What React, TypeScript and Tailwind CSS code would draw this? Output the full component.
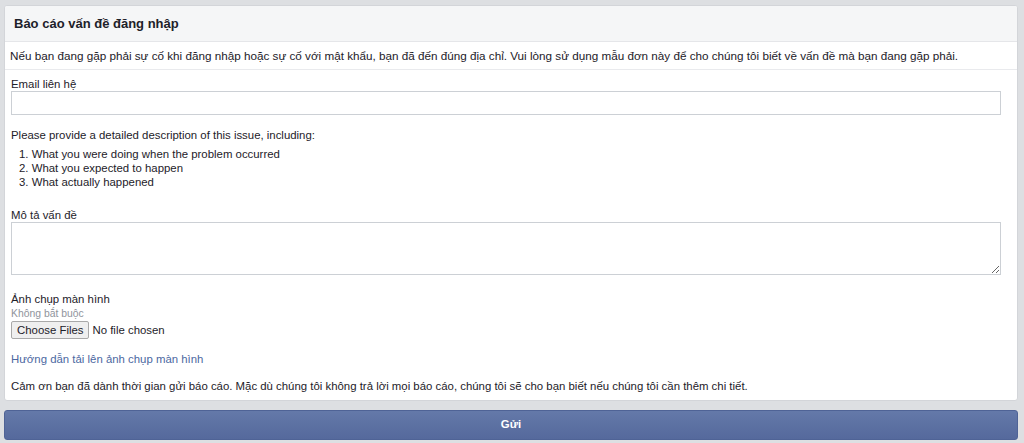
import React from "react";

export default function App() {
  return (
    <div
      className="w-[1024px] h-[443px] bg-[#dddfe2] pt-[5px] px-[4px] text-[#1d2129] text-[11.4px]"
      style={{ fontFamily: '"Liberation Sans", Arial, sans-serif' }}
    >
      <div className="w-[1014px] bg-white border border-[#d3d5d9] rounded-[3px] overflow-hidden">
        <div className="h-[36px] bg-[#f5f6f7] border-b border-[#e5e6e9] flex items-center pl-[9px]">
          <span className="text-[13px] font-bold text-[#1d2129]">Báo cáo vấn đề đăng nhập</span>
        </div>
        <div className="h-[28px] border-b border-[#e9eaed] flex items-center pl-[5px] text-[11.7px]">
          Nếu bạn đang gặp phải sự cố khi đăng nhập hoặc sự cố với mật khẩu, bạn đã đến đúng địa chỉ. Vui lòng sử dụng mẫu đơn này để cho chúng tôi biết về vấn đề mà bạn đang gặp phải.
        </div>
        <div className="pl-[6px] pt-[7px] pb-[7px] leading-[14px]">
          <div>Email liên hệ</div>
          <input
            type="text"
            className="block w-[990px] h-[24px] border border-[#ccd0d5] bg-white outline-none"
          />
          <div className="mt-[13px]">Please provide a detailed description of this issue, including:</div>
          <ol className="mt-[5px] pl-[8px]">
            <li>1. What you were doing when the problem occurred</li>
            <li>2. What you expected to happen</li>
            <li>3. What actually happened</li>
          </ol>
          <div className="mt-[19px]">Mô tả vấn đề</div>
          <textarea
            className="block w-[990px] h-[53px] border border-[#ccd0d5] bg-white outline-none resize-y"
          />
          <div className="mt-[17px]">Ảnh chụp màn hình</div>
          <div className="text-[10.4px] text-[#90949c] leading-[15px]">Không bắt buộc</div>
          <input
            type="file"
            multiple
            className="block h-[18px] text-[11.4px] leading-[14px] file:h-[18px] file:px-[5px] file:mr-[3px] file:border file:border-[#a9a9a9] file:rounded-[2px] file:bg-[#efefef] file:text-[#1d2129]"
          />
          <div className="mt-[13px] text-[#4b67a1]">Hướng dẫn tải lên ảnh chụp màn hình</div>
          <div className="mt-[13px]">
            Cảm ơn bạn đã dành thời gian gửi báo cáo. Mặc dù chúng tôi không trả lời mọi báo cáo, chúng tôi sẽ cho bạn biết nếu chúng tôi cần thêm chi tiết.
          </div>
        </div>
      </div>
      <button
        type="button"
        className="mt-[9px] w-[1014px] h-[30px] rounded-[3px] border border-[#4f6396] bg-gradient-to-b from-[#6479a9] to-[#55699c] text-white font-bold text-[11.4px] flex items-center justify-center"
      >
        Gửi
      </button>
    </div>
  );
}
